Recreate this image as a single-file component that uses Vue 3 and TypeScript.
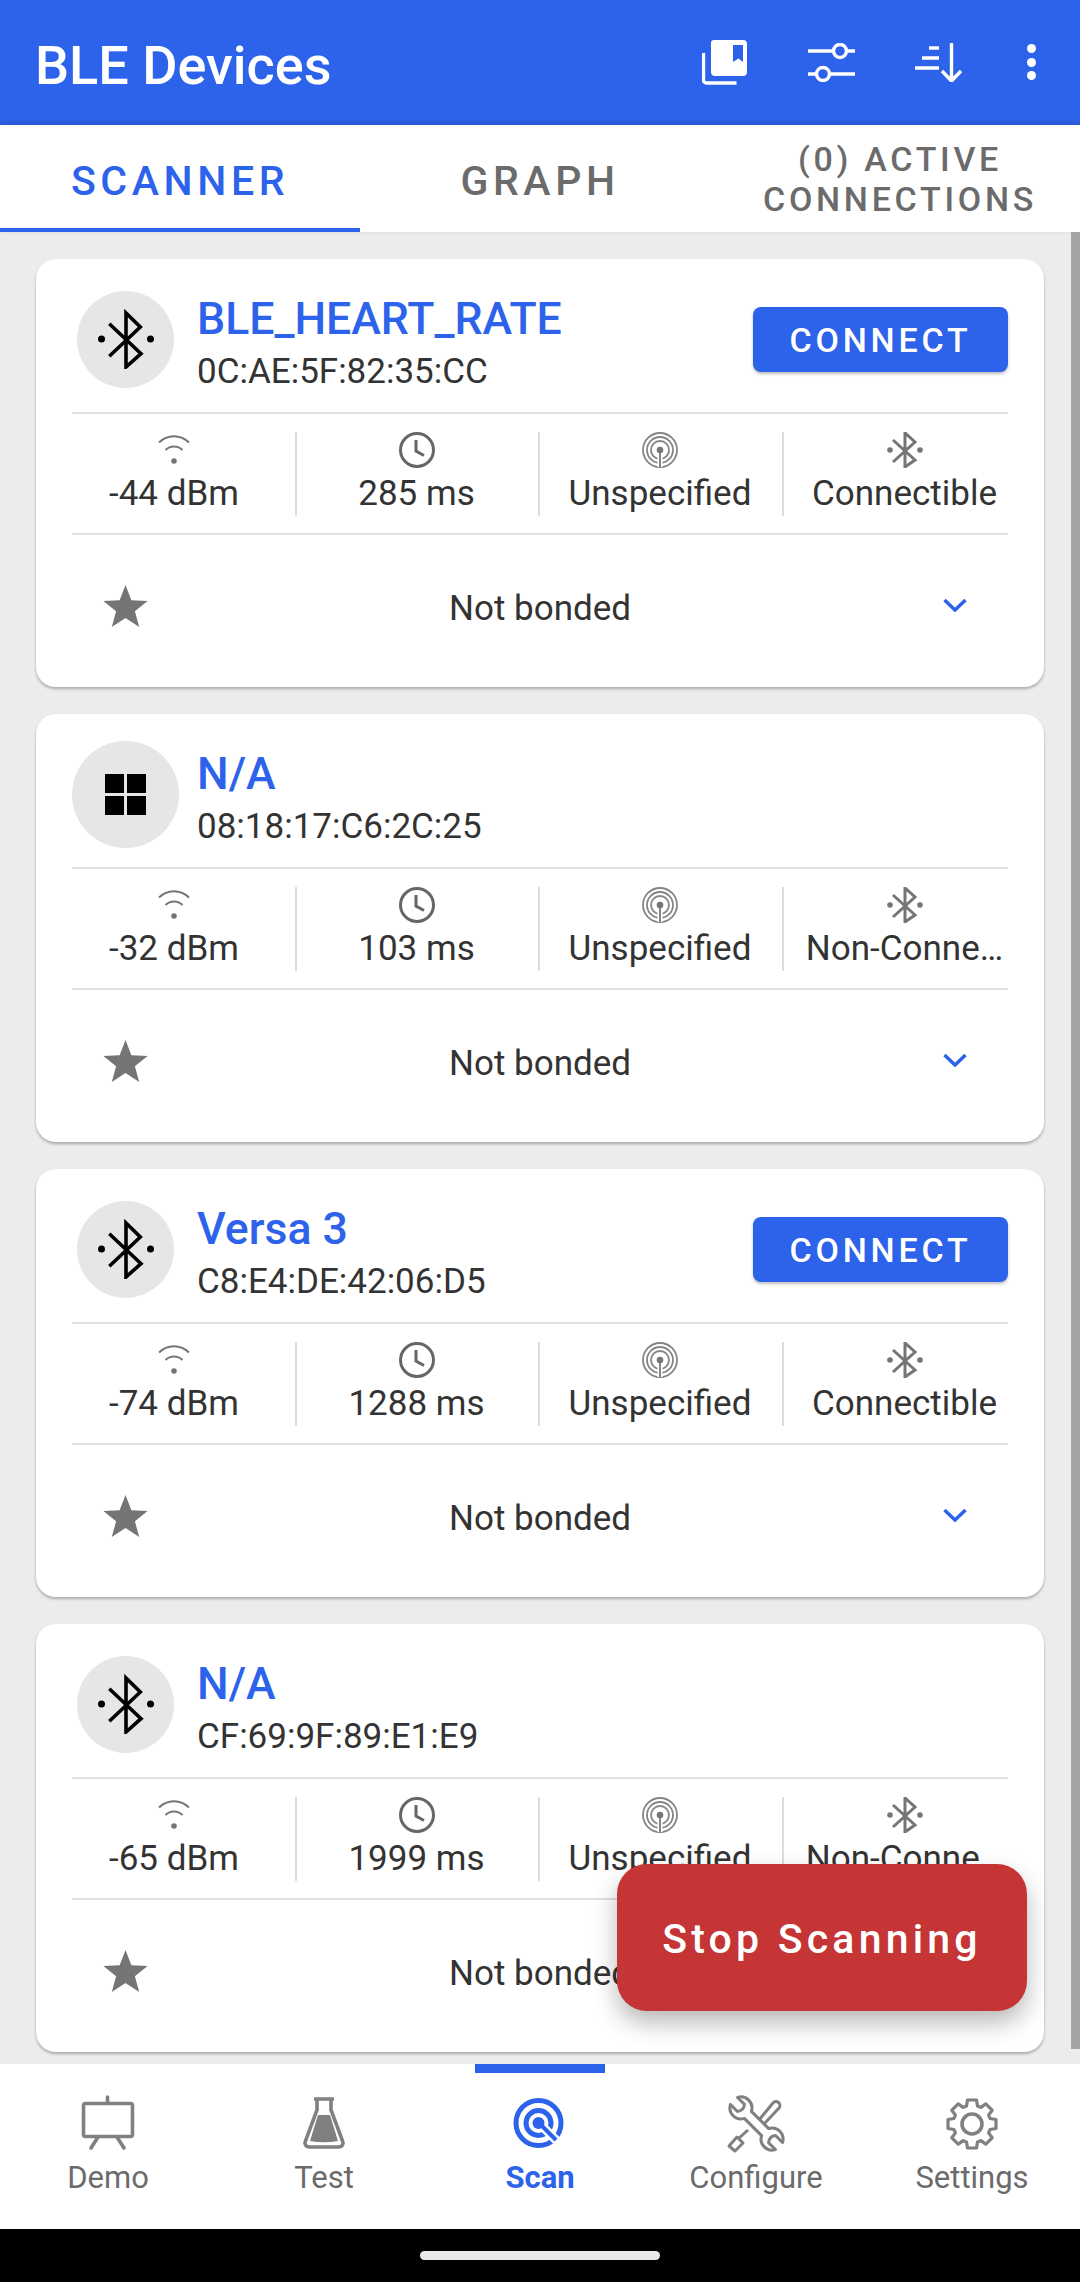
<script setup lang="ts">
interface Device {
  name: string
  mac: string
  rssi: string
  interval: string
  kind: string
  beacon?: boolean
  connectable: boolean
}

const devices: Device[] = [
  { name: 'BLE_HEART_RATE', mac: '0C:AE:5F:82:35:CC', rssi: '-44 dBm', interval: '285 ms', kind: 'Connectible', connectable: true },
  { name: 'N/A', mac: '08:18:17:C6:2C:25', rssi: '-32 dBm', interval: '103 ms', kind: 'Non-Conne…', beacon: true, connectable: false },
  { name: 'Versa 3', mac: 'C8:E4:DE:42:06:D5', rssi: '-74 dBm', interval: '1288 ms', kind: 'Connectible', connectable: true },
  { name: 'N/A', mac: 'CF:69:9F:89:E1:E9', rssi: '-65 dBm', interval: '1999 ms', kind: 'Non-Conne…', connectable: false },
]

const navItems = ['Demo', 'Test', 'Scan', 'Configure', 'Settings']

// 8 tooth gear outline, centred on 30,30
function gearPath(): string {
  const parts: string[] = []
  const teeth = 8
  for (let i = 0; i < teeth; i++) {
    const a = (i * Math.PI * 2) / teeth - Math.PI / 2
    const pt = (r: number, d: number) => {
      const x = 30 + r * Math.cos(a) - d * Math.sin(a)
      const y = 30 + r * Math.sin(a) + d * Math.cos(a)
      return x.toFixed(2) + ' ' + y.toFixed(2)
    }
    parts.push((i === 0 ? 'M' : 'L') + pt(18, -5.5))
    parts.push('L' + pt(24, -4.5))
    parts.push('L' + pt(24, 4.5))
    parts.push('L' + pt(18, 5.5))
  }
  return parts.join(' ') + ' Z'
}
const gear = gearPath()
</script>

<template>
  <div class="app">
    <header class="topbar">
      <span class="title">BLE Devices</span>
      <div class="actions">
        <svg class="act act-book" viewBox="0 0 45 45">
          <path d="M1.5 13v27a3 3 0 0 0 3 3h30" fill="none" stroke="#fff" stroke-width="3.4" />
          <path fill="#fff" fill-rule="evenodd" d="M12 0h29a4 4 0 0 1 4 4v28a4 4 0 0 1-4 4H13a4 4 0 0 1-4-4V3a3 3 0 0 1 3-3zm19 5v17l5.500-3.500L41 22V5z" />
        </svg>
        <svg class="act act-sliders" viewBox="0 0 47 39" fill="none" stroke="#fff" stroke-width="3.4">
          <path d="M0 8h25M39 8h8M0 31h8M22 31h25" />
          <circle cx="32" cy="8" r="6.500" />
          <circle cx="15" cy="31" r="6.500" />
        </svg>
        <svg class="act act-sort" viewBox="0 0 47 39" fill="none" stroke="#fff" stroke-width="3.400">
          <path d="M14 5h10M7 15h17M0 25h24M36.500 0v38M27 28l9.500 10L46 28" />
        </svg>
        <div class="dots"><i></i><i></i><i></i></div>
      </div>
    </header>

    <nav class="tabs">
      <div class="tab tab-on">SCANNER</div>
      <div class="tab">GRAPH</div>
      <div class="tab tab-small">(0) ACTIVE<br />CONNECTIONS</div>
    </nav>

    <main class="list">
      <section v-for="d in devices" :key="d.mac" class="card">
        <div class="head">
          <div class="avatar" :class="{ big: d.beacon }">
            <div v-if="d.beacon" class="squares"><i></i><i></i><i></i><i></i></div>
            <svg v-else viewBox="-30 -30 60 60" width="60" height="60">
              <path d="M-16.700 -15.300L15 14.700L0 28V-26L14.300 -12L-16.700 17.300" fill="none" stroke="#000" stroke-width="3.600" />
              <circle cx="-24.500" cy="0" r="3.500" />
              <circle cx="24.500" cy="0" r="3.500" />
            </svg>
          </div>
          <div class="names">
            <div class="name">{{ d.name }}</div>
            <div class="mac">{{ d.mac }}</div>
          </div>
          <button v-if="d.connectable" class="connect">CONNECT</button>
        </div>

        <div class="stats">
          <div class="stat">
            <svg viewBox="0 0 36 36" width="36" height="36" fill="none" stroke="#757575" stroke-width="2">
              <path d="M3 10.500a21 21 0 0 1 30 0M9.500 18a12 12 0 0 1 17 0" />
              <circle cx="18" cy="29" r="2.800" fill="#757575" stroke="none" />
            </svg>
            <span>{{ d.rssi }}</span>
          </div>
          <div class="stat">
            <svg viewBox="0 0 36 36" width="36" height="36" fill="none" stroke="#666" stroke-width="3">
              <circle cx="18" cy="18" r="16.500" />
              <path d="M17 8v11l8 4.500" />
            </svg>
            <span>{{ d.interval }}</span>
          </div>
          <div class="stat">
            <svg viewBox="0 0 36 36" width="36" height="36" fill="none" stroke="#858585" stroke-width="1.800">
              <circle cx="18" cy="18" r="17" />
              <circle cx="18" cy="18" r="13" />
              <circle cx="18" cy="18" r="9" />
              <path d="M18 35V18" stroke-width="5" stroke="#fff" />
              <path d="M18 36V20" stroke-width="2" />
              <circle cx="18" cy="18" r="3.300" fill="#757575" stroke="none" />
            </svg>
            <span>Unspecified</span>
          </div>
          <div class="stat">
            <svg viewBox="-18 -18 36 36" width="36" height="36">
              <path d="M-12 -10L10 10L0 17V-17L10 -8L-12 12" fill="none" stroke="#757575" stroke-width="3" />
              <circle cx="-15" cy="0" r="2.800" fill="#757575" />
              <circle cx="15" cy="0" r="2.800" fill="#757575" />
            </svg>
            <span>{{ d.kind }}</span>
          </div>
        </div>

        <div class="foot">
          <svg class="foot-icon" viewBox="0 0 24 24" width="47" height="47" fill="#757575">
            <path d="M12 1.500l3 7.800 8.300.400-6.500 5.200 2.200 8.100-7-4.600-7 4.600 2.200-8.100L.700 9.700 9 9.300z" />
          </svg>
          <span class="bond">Not bonded</span>
          <svg class="foot-icon" viewBox="0 0 24 14" width="24" height="14" fill="none" stroke="#2d62ea" stroke-width="3.500">
            <path d="M1.500 2L12 12 22.500 2" />
          </svg>
        </div>
      </section>
      <div class="scrollbar"></div>
      <button class="stop">Stop Scanning</button>
    </main>

    <nav class="bottom">
      <div v-for="item in navItems" :key="item" class="nav" :class="{ 'nav-on': item === 'Scan' }">
        <svg viewBox="0 0 60 60" width="60" height="60">
          <g v-if="item === 'Demo'" fill="none" stroke="#808080" stroke-width="3.600">
            <rect x="5.500" y="9.500" width="49" height="33" rx="2" />
            <path d="M29.500 3v6M20 43l-7 11M39 43l7 11" stroke-linecap="round" />
          </g>
          <g v-else-if="item === 'Test'">
            <path d="M20 6h20M23 6v11L11.500 48a4 4 0 0 0 3.500 6h30a4 4 0 0 0 3.500-6L37 17V6" transform="translate(0 -1)" fill="none" stroke="#808080" stroke-width="3.600" />
            <path d="M24 21h12l8 26q-14 2.500-28 0z" fill="#808080" />
          </g>
          <g v-else-if="item === 'Scan'" fill="none" stroke="#2d62ea">
            <circle cx="28.500" cy="29" r="22.500" stroke-width="5" />
            <circle cx="28.500" cy="29" r="12.500" stroke-width="5" />
            <path d="M28 28L47 47" stroke="#fff" stroke-width="9" />
            <path d="M30 30L46 46" stroke-width="4" />
            <circle cx="28.500" cy="29" r="6" fill="#2d62ea" stroke="none" />
          </g>
          <g v-else-if="item === 'Configure'" fill="none" stroke="#808080" stroke-width="3">
            <path transform="translate(4.500 3.500) rotate(-45 26 26)" d="M21 13.800A11 11 0 0 1 21 -5.800L21 4Q26 8 31 4L31 -5.800A11 11 0 0 1 31 13.800L31 38.200A11 11 0 0 1 31 57.800L31 48Q26 44 21 48L21 57.800A11 11 0 0 1 21 38.200Z" stroke-linejoin="round" />
            <path d="M33 26L47 9a3.500 3.500 0 0 1 6 5L38 30" />
            <path d="M22 36L13 44" />
            <path d="M3 52L11 43l6 6-8 8z" stroke-linejoin="round" />
          </g>
          <g v-else fill="none" stroke="#808080" stroke-width="3.200">
            <path :d="gear" stroke-linejoin="round" />
            <circle cx="30" cy="30" r="10" stroke-width="3.600" />
          </g>
        </svg>
        <span class="nav-label">{{ item }}</span>
      </div>
    </nav>

    <footer class="home"><div class="pill"></div></footer>
  </div>
</template>

<style scoped>
.app {
  width: 1080px;
  height: 2282px;
  display: flex;
  flex-direction: column;
  background: #ececec;
  font-family: Roboto, "Noto Sans", sans-serif;
  overflow: hidden;
  color: #333;
}

.topbar {
  height: 125px;
  flex: none;
  background: #2d62ea;
  display: flex;
  align-items: center;
  justify-content: space-between;
  padding-left: 35px;
  box-sizing: border-box;
}
.title {
  color: #fff;
  font-size: 54px;
  font-weight: 500;
  padding-top: 6px;
}
.actions {
  display: flex;
  align-items: center;
  height: 45px;
  position: relative;
  width: 378px;
}
.act { position: absolute; }
.act-book { left: 0; top: 0; width: 45px; height: 45px; }
.act-sliders { left: 106px; top: 3px; width: 47px; height: 39px; }
.act-sort { left: 213px; top: 3px; width: 47px; height: 39px; }
.dots {
  position: absolute;
  left: 325px;
  top: 4px;
  display: flex;
  flex-direction: column;
  gap: 4.500px;
}
.dots i {
  width: 9px;
  height: 9px;
  border-radius: 50%;
  background: #fff;
}

.tabs {
  height: 107px;
  flex: none;
  background: #fff;
  display: grid;
  grid-template-columns: repeat(3, 1fr);
  box-shadow: 0 -2px 6px rgba(0, 0, 0, 0.15);
}
.tab {
  display: flex;
  align-items: center;
  justify-content: center;
  text-align: center;
  color: #6b6b6b;
  font-size: 41px;
  font-weight: 500;
  letter-spacing: 4.600px;
  padding-top: 5px;
  box-sizing: border-box;
}
.tab-on {
  color: #2d62ea;
  border-bottom: 4px solid #2d62ea;
  padding-top: 8px;
}
.tab-small {
  font-size: 34px;
  line-height: 40px;
  letter-spacing: 3.700px;
  padding-top: 1px;
}

.list {
  flex: 1;
  min-height: 0;
  position: relative;
  padding: 27px 36px 0;
  display: flex;
  flex-direction: column;
  gap: 27px;
  overflow: hidden;
}
.card {
  flex: none;
  height: 428px;
  background: #fff;
  border-radius: 20px;
  padding: 0 36px;
  box-sizing: border-box;
  box-shadow: 0 2px 3px rgba(0, 0, 0, 0.28);
  display: flex;
  flex-direction: column;
}

.head {
  height: 155px;
  flex: none;
  display: flex;
  align-items: center;
  padding-top: 8px;
  padding-bottom: 1px;
  box-sizing: border-box;
  border-bottom: 2px solid #e0e0e0;
}
.avatar {
  width: 97px;
  height: 97px;
  margin: 0 23px 0 5px;
  flex: none;
  border-radius: 50%;
  background: #e6e6e6;
  display: flex;
  align-items: center;
  justify-content: center;
}
.avatar.big {
  width: 107px;
  height: 107px;
  margin: 0 18px 0 0;
}
.squares {
  display: grid;
  grid-template-columns: 19px 19px;
  grid-template-rows: 19px 19px;
  gap: 3px;
}
.squares i { background: #000; }
.names {
  flex: 1;
  min-width: 0;
  padding-top: 5px;
}
.name {
  color: #2d62ea;
  font-size: 44.600px;
  line-height: 56px;
  font-weight: 500;
}
.mac {
  font-size: 35px;
  line-height: 40px;
  margin-top: 5px;
}
.connect {
  width: 255px;
  height: 65px;
  flex: none;
  border: none;
  border-radius: 8px;
  background: #2d62ea;
  color: #fff;
  font-family: inherit;
  font-size: 34px;
  font-weight: 500;
  letter-spacing: 3.800px;
  padding: 2px 0 0;
  box-shadow: 0 2px 3px rgba(0, 0, 0, 0.25);
}

.stats {
  height: 121px;
  flex: none;
  display: grid;
  grid-template-columns: 223px 243px 244px 226px;
  padding: 18px 0;
  box-sizing: border-box;
  border-bottom: 2px solid #e0e0e0;
}
.stat {
  display: flex;
  flex-direction: column;
  align-items: center;
  min-width: 0;
  font-size: 35px;
  line-height: 44px;
  white-space: nowrap;
  border-left: 2px solid #dcdcdc;
  padding-right: 2px;
}
.stat span { margin-top: 4px; }
.stat svg { flex: none; }
.stat:first-child {
  border-left: none;
  padding-right: 19px;
}
.stat:last-child {
  padding-left: 17px;
  padding-right: 0;
}

.foot {
  flex: 1;
  display: grid;
  grid-template-columns: 107px 1fr 107px;
  align-items: center;
  justify-items: center;
  padding-bottom: 6px;
}
.foot-icon { margin-bottom: 6px; }
.bond {
  font-size: 35px;
}

.scrollbar {
  position: absolute;
  top: 0;
  right: 0;
  width: 9px;
  height: 1817px;
  background: #a4a4a4;
}
.stop {
  position: absolute;
  left: 617px;
  top: 1632px;
  width: 410px;
  height: 147px;
  border: none;
  border-radius: 30px;
  background: #c53535;
  color: #fff;
  font-family: inherit;
  font-size: 41px;
  font-weight: 500;
  letter-spacing: 4.200px;
  padding: 2px 0 0;
  box-shadow: 0 12px 24px rgba(0, 0, 0, 0.28);
}

.bottom {
  height: 165px;
  flex: none;
  background: #fff;
  display: grid;
  grid-template-columns: repeat(5, 1fr);
  position: relative;
}
.nav {
  display: flex;
  flex-direction: column;
  align-items: center;
  padding-top: 30px;
  box-sizing: border-box;
  color: #6b6b6b;
  font-size: 31px;
  line-height: 42px;
  position: relative;
}
.nav-label { margin-top: 3px; }
.nav-on {
  color: #2d62ea;
  font-weight: 700;
}
.nav-on::before {
  content: "";
  position: absolute;
  top: 0;
  left: 43px;
  width: 130px;
  height: 9px;
  background: #2d62ea;
}

.home {
  height: 53px;
  flex: none;
  background: #000;
  padding-top: 22px;
  box-sizing: border-box;
}
.pill {
  width: 240px;
  height: 9px;
  margin: 0 auto;
  border-radius: 5px;
  background: #e8e8e8;
}
</style>

<style>
html, body { margin: 0; padding: 0; background: #ececec; }
</style>
